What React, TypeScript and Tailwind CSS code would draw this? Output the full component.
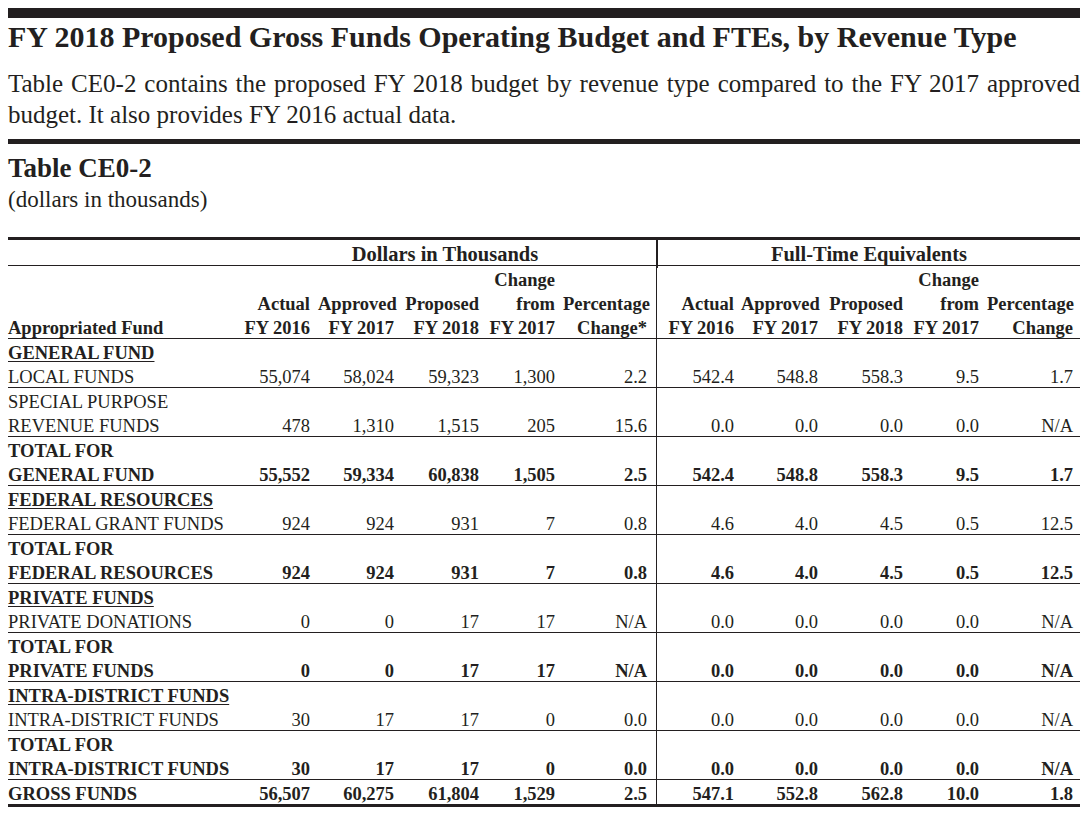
import React from "react";

const COLS =
  "grid grid-cols-[226px_84px_84px_85px_76px_93px_85px_85px_85px_76px_93px]";

type Row =
  | { kind: "section"; label: string }
  | { kind: "data" | "total" | "gross"; label: string[]; vals: string[] };

const rows: Row[] = [
  { kind: "section", label: "GENERAL FUND" },
  {
    kind: "data",
    label: ["LOCAL FUNDS"],
    vals: ["55,074", "58,024", "59,323", "1,300", "2.2", "542.4", "548.8", "558.3", "9.5", "1.7"],
  },
  {
    kind: "data",
    label: ["SPECIAL PURPOSE", "REVENUE FUNDS"],
    vals: ["478", "1,310", "1,515", "205", "15.6", "0.0", "0.0", "0.0", "0.0", "N/A"],
  },
  {
    kind: "total",
    label: ["TOTAL FOR", "GENERAL FUND"],
    vals: ["55,552", "59,334", "60,838", "1,505", "2.5", "542.4", "548.8", "558.3", "9.5", "1.7"],
  },
  { kind: "section", label: "FEDERAL RESOURCES" },
  {
    kind: "data",
    label: ["FEDERAL GRANT FUNDS"],
    vals: ["924", "924", "931", "7", "0.8", "4.6", "4.0", "4.5", "0.5", "12.5"],
  },
  {
    kind: "total",
    label: ["TOTAL FOR", "FEDERAL RESOURCES"],
    vals: ["924", "924", "931", "7", "0.8", "4.6", "4.0", "4.5", "0.5", "12.5"],
  },
  { kind: "section", label: "PRIVATE FUNDS" },
  {
    kind: "data",
    label: ["PRIVATE DONATIONS"],
    vals: ["0", "0", "17", "17", "N/A", "0.0", "0.0", "0.0", "0.0", "N/A"],
  },
  {
    kind: "total",
    label: ["TOTAL FOR", "PRIVATE FUNDS"],
    vals: ["0", "0", "17", "17", "N/A", "0.0", "0.0", "0.0", "0.0", "N/A"],
  },
  { kind: "section", label: "INTRA-DISTRICT FUNDS" },
  {
    kind: "data",
    label: ["INTRA-DISTRICT FUNDS"],
    vals: ["30", "17", "17", "0", "0.0", "0.0", "0.0", "0.0", "0.0", "N/A"],
  },
  {
    kind: "total",
    label: ["TOTAL FOR", "INTRA-DISTRICT FUNDS"],
    vals: ["30", "17", "17", "0", "0.0", "0.0", "0.0", "0.0", "0.0", "N/A"],
  },
  {
    kind: "gross",
    label: ["GROSS FUNDS"],
    vals: ["56,507", "60,275", "61,804", "1,529", "2.5", "547.1", "552.8", "562.8", "10.0", "1.8"],
  },
];

const headers: string[][] = [
  ["", "Actual", "FY 2016"],
  ["", "Approved", "FY 2017"],
  ["", "Proposed", "FY 2018"],
  ["Change", "from", "FY 2017"],
  ["", "Percentage", "Change*"],
  ["", "Actual", "FY 2016"],
  ["", "Approved", "FY 2017"],
  ["", "Proposed", "FY 2018"],
  ["Change", "from", "FY 2017"],
  ["", "Percentage", "Change"],
];

function numCellClass(i: number) {
  if (i === 5) return "flex flex-col justify-end text-right pr-[7px] border-l border-[#231f20]";
  if (i === 4) return "flex flex-col justify-end text-right pr-[9px]";
  if (i === 9) return "flex flex-col justify-end text-right pr-[7px]";
  return "flex flex-col justify-end text-right pr-2";
}

export default function App() {
  return (
    <div
      className="bg-white text-[#231f20] min-h-[813px] pt-2"
      style={{ fontFamily: '"Liberation Serif", "Times New Roman", serif' }}
    >
      <div className="ml-2 w-[1072px]">
        <div className="h-[10px] bg-[#231f20]" />
        <h1 className="mt-px text-[30px] leading-[36px] font-bold whitespace-nowrap">
          FY 2018 Proposed Gross Funds Operating Budget and FTEs, by Revenue Type
        </h1>
        <p className="mt-[13px] text-[25px] leading-[31px] text-justify">
          Table CE0-2 contains the proposed FY 2018 budget by revenue type compared to the FY 2017
          approved budget. It also provides FY 2016 actual data.
        </p>
        <div className="mt-[9px] h-[5px] bg-[#231f20]" />
        <h2 className="mt-2 text-[27px] leading-[32px] font-bold">Table CE0-2</h2>
        <div className="mt-[3px] text-[23px] leading-[26px]">(dollars in thousands)</div>

        <div className="mt-[24px] border-t-[3px] border-[#231f20] text-[18.5px] leading-[28px]">
          {/* header row 1 */}
          <div className={`${COLS} border-b border-[#231f20] font-bold h-[26px] text-[20.5px]`}>
            <div />
            <div className="col-span-5 text-center leading-[28px]">Dollars in Thousands</div>
            <div className="col-span-5 text-center leading-[28px] border-l-2 border-[#231f20]">
              Full-Time Equivalents
            </div>
          </div>
          {/* header row 2 */}
          <div className={`${COLS} border-b border-[#231f20] font-bold h-[73px]`}>
            <div className="flex flex-col justify-end">
              <div className="h-[24px] whitespace-nowrap">Appropriated Fund</div>
            </div>
            {headers.map((h, i) => (
              <div key={i} className={numCellClass(i)}>
                {h.map((l, j) => (
                  <div key={j} className="h-[24px] whitespace-nowrap">
                    {l}
                  </div>
                ))}
              </div>
            ))}
          </div>
          {rows.map((r, idx) => {
            if (r.kind === "section") {
              return (
                <div key={idx} className={`${COLS} h-[24px] font-bold`}>
                  <div className="col-span-6 h-[24px]">
                    <span className="underline underline-offset-2 decoration-1">{r.label}</span>
                  </div>
                  <div className="col-span-5 border-l border-[#231f20]" />
                </div>
              );
            }
            const bold = r.kind !== "data";
            const border =
              r.kind === "gross"
                ? "border-b-[3px] border-[#231f20]"
                : "border-b border-[#231f20]";
            return (
              <div key={idx} className={`${COLS} ${border} ${bold ? "font-bold" : ""}`}>
                <div className="flex flex-col justify-end whitespace-nowrap">
                  {r.label.map((l, j) => (
                    <div key={j} className="h-[24px]">
                      {l}
                    </div>
                  ))}
                </div>
                {r.vals.map((v, i) => (
                  <div key={i} className={numCellClass(i)}>
                    <div className="h-[24px] whitespace-nowrap">{v}</div>
                  </div>
                ))}
              </div>
            );
          })}
        </div>
      </div>
    </div>
  );
}
